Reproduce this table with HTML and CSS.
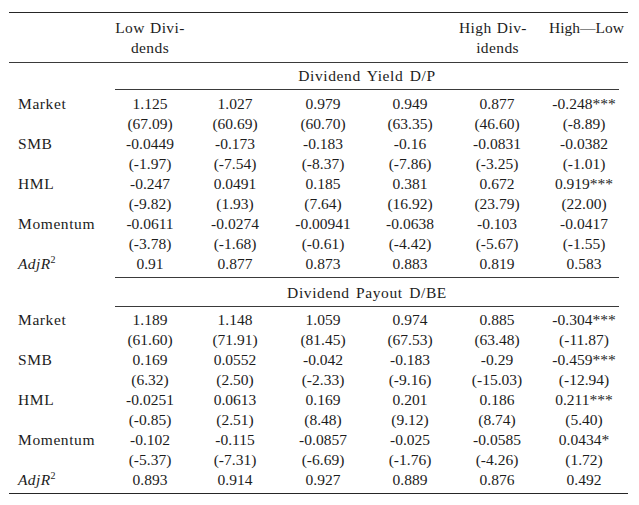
FILE: index.html
```html
<!DOCTYPE html>
<html lang="en">
<head>
<meta charset="utf-8">
<title>Dividend portfolios factor regressions</title>
<link rel="stylesheet" href="styles.css">
</head>
<body>
<div class="page">
<table class="reg">
  <colgroup>
    <col class="c-label"><col class="c1"><col class="c2"><col class="c3"><col class="c4"><col class="c5"><col class="c6"><col class="c-pad">
  </colgroup>
  <thead>
    <tr class="head">
      <th class="lbl"></th>
      <th class="h-low"><span class="hword">Low Divi-</span><br><span class="hword">dends</span></th>
      <th></th>
      <th></th>
      <th></th>
      <th class="h-high"><span class="hword">High Div-</span><br><span class="hword">idends</span></th>
      <th class="num6 h-diff">High—Low</th>
      <th></th>
    </tr>
  </thead>
  <tbody>
    <tr class="group">
      <td class="lbl"></td>
      <td colspan="6" class="gtitle"><span class="word">Dividend Yield D/P</span></td>
      <td></td>
    </tr>
    <tr class="first"><td class="lbl">Market</td><td>1.125</td><td>1.027</td><td>0.979</td><td>0.949</td><td>0.877</td><td class="num6">-0.248***</td><td></td></tr>
    <tr><td class="lbl"></td><td>(67.09)</td><td>(60.69)</td><td>(60.70)</td><td>(63.35)</td><td>(46.60)</td><td class="num6">(-8.89)</td><td></td></tr>
    <tr><td class="lbl">SMB</td><td>-0.0449</td><td>-0.173</td><td>-0.183</td><td>-0.16</td><td>-0.0831</td><td class="num6">-0.0382</td><td></td></tr>
    <tr><td class="lbl"></td><td>(-1.97)</td><td>(-7.54)</td><td>(-8.37)</td><td>(-7.86)</td><td>(-3.25)</td><td class="num6">(-1.01)</td><td></td></tr>
    <tr><td class="lbl">HML</td><td>-0.247</td><td>0.0491</td><td>0.185</td><td>0.381</td><td>0.672</td><td class="num6">0.919***</td><td></td></tr>
    <tr><td class="lbl"></td><td>(-9.82)</td><td>(1.93)</td><td>(7.64)</td><td>(16.92)</td><td>(23.79)</td><td class="num6">(22.00)</td><td></td></tr>
    <tr><td class="lbl">Momentum</td><td>-0.0611</td><td>-0.0274</td><td>-0.00941</td><td>-0.0638</td><td>-0.103</td><td class="num6">-0.0417</td><td></td></tr>
    <tr><td class="lbl"></td><td>(-3.78)</td><td>(-1.68)</td><td>(-0.61)</td><td>(-4.42)</td><td>(-5.67)</td><td class="num6">(-1.55)</td><td></td></tr>
    <tr class="last"><td class="lbl"><i>AdjR</i><sup>2</sup></td><td class="rule">0.91</td><td class="rule">0.877</td><td class="rule">0.873</td><td class="rule">0.883</td><td class="rule">0.819</td><td class="rule num6">0.583</td><td></td></tr>

    <tr class="group group2">
      <td class="lbl"></td>
      <td colspan="6" class="gtitle"><span class="word">Dividend Payout D/BE</span></td>
      <td></td>
    </tr>
    <tr class="first2"><td class="lbl">Market</td><td>1.189</td><td>1.148</td><td>1.059</td><td>0.974</td><td>0.885</td><td class="num6">-0.304***</td><td></td></tr>
    <tr><td class="lbl"></td><td>(61.60)</td><td>(71.91)</td><td>(81.45)</td><td>(67.53)</td><td>(63.48)</td><td class="num6">(-11.87)</td><td></td></tr>
    <tr><td class="lbl">SMB</td><td>0.169</td><td>0.0552</td><td>-0.042</td><td>-0.183</td><td>-0.29</td><td class="num6">-0.459***</td><td></td></tr>
    <tr><td class="lbl"></td><td>(6.32)</td><td>(2.50)</td><td>(-2.33)</td><td>(-9.16)</td><td>(-15.03)</td><td class="num6">(-12.94)</td><td></td></tr>
    <tr><td class="lbl">HML</td><td>-0.0251</td><td>0.0613</td><td>0.169</td><td>0.201</td><td>0.186</td><td class="num6">0.211***</td><td></td></tr>
    <tr><td class="lbl"></td><td>(-0.85)</td><td>(2.51)</td><td>(8.48)</td><td>(9.12)</td><td>(8.74)</td><td class="num6">(5.40)</td><td></td></tr>
    <tr><td class="lbl">Momentum</td><td>-0.102</td><td>-0.115</td><td>-0.0857</td><td>-0.025</td><td>-0.0585</td><td class="num6">0.0434*</td><td></td></tr>
    <tr><td class="lbl"></td><td>(-5.37)</td><td>(-7.31)</td><td>(-6.69)</td><td>(-1.76)</td><td>(-4.26)</td><td class="num6">(1.72)</td><td></td></tr>
    <tr class="end"><td class="lbl"><i>AdjR</i><sup>2</sup></td><td>0.893</td><td>0.914</td><td>0.927</td><td>0.889</td><td>0.876</td><td class="num6">0.492</td><td></td></tr>
  </tbody>
</table>
</div>
</body>
</html>
```

FILE: styles.css
```css
html, body {
  margin: 0;
  padding: 0;
  background: #ffffff;
}

.page {
  padding: 12px 0 0 9px;
}

.reg {
  width: 619px;
  table-layout: fixed;
  border-collapse: separate;
  border-spacing: 0;
  font-family: "Liberation Serif", "Times New Roman", serif;
  font-size: 15.5px;
  color: #1c1c1c;
}

.c-label { width: 106px; }
.c1 { width: 70px; }
.c2 { width: 100px; }
.c3 { width: 76px; }
.c4 { width: 98px; }
.c5 { width: 76px; }
.c6 { width: 84px; }
.c-pad { width: 9px; }

.reg th,
.reg td {
  padding: 0;
  height: 20px;
  line-height: 20px;
  text-align: center;
  font-weight: normal;
  white-space: nowrap;
  vertical-align: top;
}

.reg td.lbl,
.reg th.lbl {
  text-align: left;
  padding-left: 9px;
  letter-spacing: 0.6px;
}

.reg td.num6,
.reg th.num6 {
  padding-left: 14px;
}

.word {
  letter-spacing: 0.6px;
  word-spacing: 2px;
}

.hword {
  letter-spacing: 0.4px;
  word-spacing: 1px;
}

/* header block with top and mid rules */
.head th {
  border-top: 1px solid #262626;
  border-bottom: 1px solid #3a3a3a;
  padding-top: 5px;
  padding-bottom: 4px;
}

.head th.h-high {
  text-align: right;
  padding-right: 16px;
}

.reg .head th.h-diff {
  text-align: left;
  padding-left: 14px;
}

/* group title rows with cmidrule */
.group td {
  padding-top: 3px;
  padding-bottom: 3px;
}

.group td.gtitle {
  border-bottom: 1px solid #3a3a3a;
}

.group2 td {
  padding-top: 5px;
}

.first td {
  padding-top: 4px;
}

.first2 td {
  padding-top: 3px;
}

.last td {
  padding-bottom: 3px;
}

.last td.rule {
  border-bottom: 1px solid #3a3a3a;
}

.end td {
  padding-bottom: 3px;
  border-bottom: 1px solid #262626;
}

.reg sup {
  font-size: 10px;
  line-height: 0;
  vertical-align: 6px;
  letter-spacing: 0;
}

.reg i {
  letter-spacing: 0.4px;
}
```
